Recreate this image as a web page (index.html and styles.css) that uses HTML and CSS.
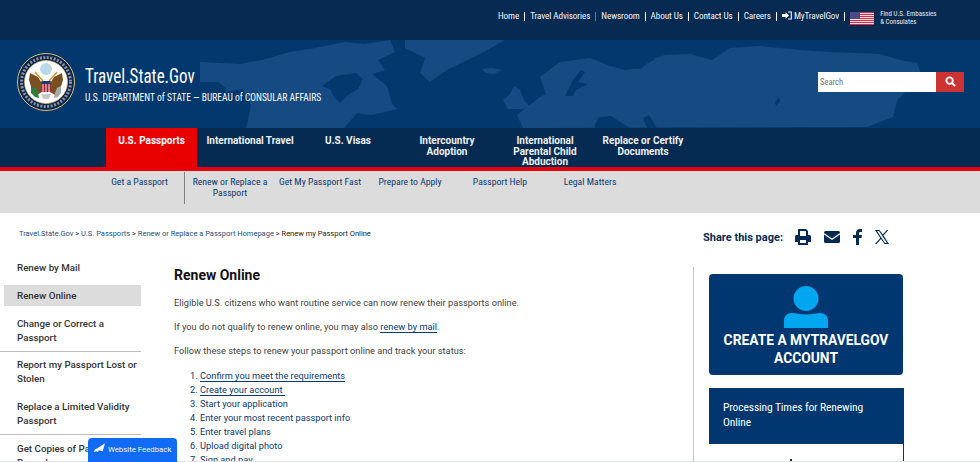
FILE: index.html
```html
<!DOCTYPE html>
<html lang="en">
<head>
  <meta charset="UTF-8">
  <meta name="viewport" content="width=device-width, initial-scale=1.0">
  <title>Renew my Passport Online</title>
  <link rel="stylesheet" href="styles.css">
</head>
<body>
  <div class="top-bar">
    <a class="top-link" href="#">Home</a><span class="pipe"></span>
    <a class="top-link" href="#">Travel Advisories</a><span class="pipe pipe-red"></span>
    <a class="top-link" href="#">Newsroom</a><span class="pipe"></span>
    <a class="top-link" href="#">About Us</a><span class="pipe"></span>
    <a class="top-link" href="#">Contact Us</a><span class="pipe"></span>
    <a class="top-link" href="#">Careers</a><span class="pipe"></span>
    <a class="top-link" href="#">
      <svg class="login-icon" viewBox="0 0 14 12" width="10" height="9"><path d="M0 4h5V1.500L10 6l-5 4.500V8H0z" fill="#fff"/><path d="M8.500 1H13v10H8.500" fill="none" stroke="#fff" stroke-width="1.500"/></svg>
      MyTravelGov</a><span class="pipe"></span>
    <svg class="flag" viewBox="0 0 24 13" width="24" height="13">
      <rect width="24" height="13" fill="#f4d9dc"/>
      <path d="M0 .5h24M0 2.500h24M0 4.500h24M0 6.500h24M0 8.500h24M0 10.500h24M0 12.500h24" stroke="#c8324a" stroke-width="1"/>
      <rect width="10" height="7" fill="#4c4a86"/>
    </svg>
    <a class="embassy" href="#">Find U.S. Embassies<br>&amp; Consulates</a>
  </div>

  <header class="masthead">
    <svg class="map" viewBox="0 0 980 88" width="980" height="88">
      <g fill="#164a83">
        <path d="M200 22l40 2 22-4 28-8 25-4 30-6 20 2 25-4 5 12-17 8 7 10-13 4 15 12 5 18 5 5-25 6-15-2-12 14-8 10h-32l-10-8-24 8h-30l6-12 4-20-8-16-24 4-19 4z"/>
        <path d="M405 0h100l-25 14-33 16-17 12-10-9 5-15-20-10z"/>
        <path d="M482 29l10-1 10 2-8 4-8-1z"/>
        <path d="M503 60l7-6 4-8 6 4 4 10 6 7-8 2-14 0zM540 88l-17 0-6-13 23-18 6-3-6-17 20-15 30-4 20 8 15 4 15-2 10-8 15-5 25-1 22 6 18-12 30-2 40 4 30 2 50 2 20 6 17 3 5 14-25 23-4 17-26 10z"/>
      </g>
      <g fill="#03386f">
        <path d="M322 46l14-10 20-3 7 6-5 10-10 6-8 8-6-6-4-8z"/>
        <path d="M200 42h18l8 6-2 12 6 14-4 14h-26z"/>
        <path d="M567 52l6-12 8-10 4 2-7 10 10 2-12 6-3 6-8 0z"/>
        <path d="M595 84l4-7 12-1 8 5 11 7h-35zM643 78l6-3 8 13h-10z"/>
        <path d="M775 62l4-5 1 5-4 4z"/>
        <path d="M632 28l6-6 12-3 6 0-8 4-8 6z"/>
      </g>
    </svg>
    <div class="brand">
      <svg class="seal" viewBox="0 0 58 58" width="58" height="58">
        <circle cx="29" cy="29" r="28.500" fill="#0c2548" stroke="#d8c27a" stroke-width="1"/>
        <circle cx="29" cy="29" r="24.500" fill="none" stroke="#8d93a6" stroke-width="3" stroke-dasharray="2 1.500"/>
        <circle cx="29" cy="29" r="21.500" fill="#fff" stroke="#d8c27a" stroke-width=".7"/>
        <circle cx="29" cy="16" r="6" fill="#b9d8e8"/>
        <path fill="#7a4f22" d="M13 20l8 4 5 8-1 7-5 3-5-5-3-10zM45 20l-8 4-5 8 1 7 5 3 5-5 3-10z"/>
        <path d="M18 19l8 9M40 19l-8 9" stroke="#c79a2b" stroke-width="1.500"/>
        <rect x="24.500" y="28" width="9" height="11" fill="#a81f3a"/>
        <rect x="24.500" y="28" width="9" height="3" fill="#25356d"/>
        <path d="M26 31v8M29 31v9M32 31v8" stroke="#fff" stroke-width=".9"/>
        <path fill="#2f7d3a" d="M14 34l5 1 2 5 1 5-4-1-4-4z"/>
        <path fill="#a8a8a8" d="M44 33l-4 2-2 5-1 5 4-1 3-4z"/>
        <path fill="#c9c9c9" d="M24 41h10l-2 5h-6z"/>
      </svg>
      <div class="brand-text">
        <a class="site-name" href="#">Travel.State.Gov</a>
        <div class="bureau">U.S. DEPARTMENT of STATE — BUREAU of CONSULAR AFFAIRS</div>
      </div>
    </div>
    <form class="search">
      <input class="search-input" type="text" placeholder="Search">
      <button class="search-btn" type="button" aria-label="Search">
        <svg viewBox="0 0 12 12" width="11" height="11"><circle cx="5" cy="5" r="3.500" fill="none" stroke="#fff" stroke-width="2"/><path d="M7.500 7.500L11 11" stroke="#fff" stroke-width="2.200"/></svg>
      </button>
    </form>
  </header>

  <nav class="main-nav">
    <a class="main-item active" href="#">U.S. Passports</a>
    <a class="main-item" href="#">International Travel</a>
    <a class="main-item" href="#">U.S. Visas</a>
    <a class="main-item" href="#">Intercountry<br>Adoption</a>
    <a class="main-item" href="#">International<br>Parental Child<br>Abduction</a>
    <a class="main-item" href="#">Replace or Certify<br>Documents</a>
  </nav>

  <nav class="sub-nav">
    <a class="sub-item sub-first" href="#">Get a Passport</a>
    <a class="sub-item" href="#">Renew or Replace a<br>Passport</a>
    <a class="sub-item" href="#">Get My Passport Fast</a>
    <a class="sub-item" href="#">Prepare to Apply</a>
    <a class="sub-item" href="#">Passport Help</a>
    <a class="sub-item" href="#">Legal Matters</a>
  </nav>

  <div class="crumb-row">
    <div class="crumbs"><a href="#">Travel.State.Gov</a> &gt; <a href="#">U.S. Passports</a> &gt; <a href="#">Renew or Replace a Passport Homepage</a> &gt; <span>Renew my Passport Online</span></div>
    <div class="share">
      <span class="share-label">Share this page:</span>
      <svg class="share-icon" viewBox="0 0 16 16" width="16" height="16"><path fill="#062b53" fill-rule="evenodd" d="M3 0h8l2 2v4h1.500A1.500 1.500 0 0 1 16 7.500V13h-3v3H3v-3H0V7.500A1.500 1.500 0 0 1 1.500 6H3zm2 2v5h6V2zM5 11v3h6v-3z"/></svg>
      <svg class="share-icon" viewBox="0 0 16 12" width="16" height="12"><path fill="#062b53" d="M1.500 0h13A1.500 1.500 0 0 1 16 1.500v.4L8 7.500 0 1.900v-.4A1.500 1.500 0 0 1 1.500 0zM0 3.500l8 5.600 8-5.600v7A1.500 1.500 0 0 1 14.500 12h-13A1.500 1.500 0 0 1 0 10.500z"/></svg>
      <svg class="share-icon" viewBox="0 0 9 16" width="9" height="16"><path fill="#062b53" d="M3 16V9H0V6h3V4c0-2.700 1.600-4 4-4h2v3H7.500C6.300 3 6 3.500 6 4.500V6h3l-.5 3H6v7z"/></svg>
      <svg class="share-icon" viewBox="0 0 14 14" width="14" height="14"><path fill="#062b53" fill-rule="evenodd" d="M0 0h4.500l3.300 4.600L11.800 0h1.500L8.500 5.600 14 14H9.500L6 9l-4.400 5H0l5.300-6zM2 1l8 12h2L4 1z"/></svg>
    </div>
  </div>

  <div class="content">
    <aside class="side-nav">
      <a class="side-item" href="#">Renew by Mail</a>
      <a class="side-item side-active" href="#">Renew Online</a>
      <a class="side-item side-rule" href="#">Change or Correct a Passport</a>
      <a class="side-item" href="#">Report my Passport Lost or Stolen</a>
      <a class="side-item side-rule side-rule-wide" href="#">Replace a Limited Validity Passport</a>
      <a class="side-item" href="#">Get Copies of Passport Records</a>
    </aside>

    <main class="article">
      <h1 class="title">Renew Online</h1>
      <p>Eligible U.S. citizens who want routine service can now renew their passports online.</p>
      <p>If you do not qualify to renew online, you may also <a class="inline-link" href="#">renew by mail</a>.</p>
      <p>Follow these steps to renew your passport online and track your status:</p>
      <ol class="steps">
        <li><a href="#">Confirm you meet the requirements</a></li>
        <li><a href="#">Create your account&nbsp;</a></li>
        <li>Start your application</li>
        <li>Enter your most recent passport info</li>
        <li>Enter travel plans</li>
        <li>Upload digital photo</li>
        <li>Sign and pay</li>
      </ol>
    </main>

    <aside class="right-col">
      <a class="account-card" href="#">
        <svg viewBox="0 0 44 42" width="44" height="42"><circle cx="22" cy="12.500" r="12.500" fill="#00a6f0"/><path fill="#00a6f0" d="M0 42v-7c0-5 3-8 8-8 4 0 8 1.500 14 1.500S32 27 36 27c5 0 8 3 8 8v7z"/></svg>
        <span>CREATE A MYTRAVELGOV ACCOUNT</span>
      </a>
      <div class="times-box">
        <h2 class="times-title">Processing Times for Renewing Online</h2>
        <div class="times-body"><span class="dot"></span></div>
      </div>
    </aside>
  </div>

  <a class="feedback" href="#">
    <svg viewBox="0 0 14 12" width="11" height="10"><path fill="#fff" d="M0 11l3-1 2 1 1-2 5 1 3-10-9 6-4 2z"/></svg>
    Website Feedback
  </a>
</body>
</html>
```

FILE: styles.css
```css
html, body {
  height: 462px;
  overflow: hidden;
}
body {
  margin: 0;
  font-family: Roboto, "Liberation Sans", sans-serif;
  color: #333;
  background: #fff;
  border-bottom: 1px solid #dfe5ea;
  box-sizing: border-box;
}
a {
  text-decoration: none;
}

/* top utility bar */
.top-bar {
  height: 40px;
  box-sizing: border-box;
  padding: 9px 0 0 498px;
  background: #062a52;
  display: flex;
  align-items: flex-start;
  white-space: nowrap;
}
.top-link {
  color: #f2f5f8;
  font-stretch: 75%;
  font-size: 9.200px;
  letter-spacing: -.1px;
  line-height: 14px;
}
.login-icon {
  vertical-align: -1px;
}
.pipe {
  width: 1px;
  height: 9px;
  margin: 3px 5px 0 5px;
  background: #fff;
}
.pipe-red {
  background: #e0435a;
}
.flag {
  margin: 3px 6px 0 0;
  flex: none;
}
.embassy {
  color: #e6ebf0;
  font-stretch: 75%;
  font-size: 7px;
  line-height: 8px;
  margin-top: 1px;
}

/* masthead */
.masthead {
  position: relative;
  height: 88px;
  background: #03386f;
  display: flex;
  justify-content: space-between;
  overflow: hidden;
}
.map {
  position: absolute;
  left: 0;
  top: 0;
}
.brand {
  position: relative;
  display: flex;
  align-items: flex-start;
  padding: 13px 0 0 17px;
  gap: 10px;
}
.site-name {
  display: block;
  color: #fff;
  font-stretch: 75%;
  font-size: 20px;
  line-height: 24px;
  margin-top: 11px;
  transform: scaleX(.85);
  transform-origin: left;
}
.bureau {
  color: #fff;
  font-stretch: 75%;
  font-size: 10.500px;
  line-height: 14px;
  margin-top: 3px;
  transform: scaleX(.905);
  transform-origin: left;
}
.search {
  position: relative;
  display: flex;
  margin: 32px 16px 0 0;
  height: 20px;
}
.search-input {
  width: 118px;
  box-sizing: border-box;
  border: 0;
  padding: 0 2px;
  font-size: 8.500px;
  font-family: Roboto, sans-serif;
  font-stretch: 75%;
  background: #fff;
}
.search-btn {
  width: 28px;
  padding: 0;
  border: 0;
  background: #cc3333;
}

/* main navigation */
.main-nav {
  height: 39px;
  padding-left: 106px;
  background: #062b53;
  border-bottom: 4px solid #e80000;
  display: grid;
  grid-template-columns: 91px 106px 90px 108px 88px 108px;
}
.main-item {
  color: #eef1f4;
  font-size: 10px;
  font-weight: 700;
  line-height: 10.500px;
  text-align: center;
  padding-top: 8px;
}
.main-item.active {
  background: #e80000;
  color: #fff;
}

/* sub navigation */
.sub-nav {
  height: 42px;
  padding-left: 95px;
  background: #dcdcdc;
  display: grid;
  grid-template-columns: repeat(6, 90px);
  align-items: start;
}
.sub-item {
  color: #0a3a70;
  font-stretch: 75%;
  font-size: 9.700px;
  line-height: 11px;
  text-align: center;
  padding-top: 5px;
}
.sub-first {
  height: 28px;
  margin-top: 1px;
  padding-top: 4px;
  border-right: 1px solid #808080;
}

/* breadcrumb and share */
.crumb-row {
  height: 54px;
  display: flex;
  justify-content: space-between;
  padding: 16px 91px 0 19px;
  box-sizing: border-box;
}
.crumbs {
  font-size: 7.500px;
  line-height: 10px;
  color: #222;
}
.crumbs a {
  color: #24507f;
}
.share {
  display: flex;
  align-items: center;
  height: 18px;
  margin-top: -1px;
}
.share-label {
  font-size: 11px;
  font-weight: 700;
  color: #062b53;
  margin-right: 12px;
}
.share-icon {
  margin-right: 13px;
}
.share-icon:last-child {
  margin-right: 0;
}

/* page body */
.content {
  display: grid;
  grid-template-columns: 174px 519px 1fr;
}
.side-nav {
  width: 141px;
  margin-top: -6px;
  font-size: 9.750px;
  line-height: 14px;
  font-weight: 500;
}
.side-item {
  display: block;
  color: #333;
  padding: 0 0 0 17px;
  margin-bottom: 14px;
}
.side-active {
  margin: -4px 0 11px 4px;
  padding: 4px 0 3px 13px;
  background: #dcdcdc;
}
.side-rule {
  padding-bottom: 6px;
  margin-bottom: 6px;
  border-bottom: 1px solid #bdbdbd;
}
.side-rule-wide {
  margin-bottom: 7px;
}
.article {
  font-size: 9.250px;
  line-height: 14px;
  padding-right: 20px;
}
.title {
  margin: 0 0 13px;
  font-size: 14px;
  line-height: 16px;
  font-weight: 700;
  color: #111;
}
.article p {
  margin: 0 0 10px;
  color: #444;
}
.inline-link {
  color: #0a3a70;
  border-bottom: 1px solid #0a3a70;
}
.steps {
  margin: 11px 0 0;
  padding-left: 26px;
  color: #0b3a6e;
}
.steps a {
  color: #0a3a70;
  border-bottom: 1px solid #0a3a70;
}
.right-col {
  border-left: 1px solid #c4c4c4;
  padding: 7px 0 0 15px;
  height: 195px;
  box-sizing: border-box;
  overflow: hidden;
}
.account-card {
  width: 194px;
  height: 101px;
  box-sizing: border-box;
  padding-top: 12px;
  background: #003770;
  border-radius: 4px;
  color: #fff;
  font-size: 13.800px;
  line-height: 17.500px;
  font-weight: 700;
  text-align: center;
  display: flex;
  flex-direction: column;
  align-items: center;
  gap: 4px;
}
.account-card span {
  width: 180px;
}
.times-box {
  width: 195px;
  margin-top: 13px;
  box-sizing: border-box;
  border-right: 1px solid #003770;
}
.times-title {
  margin: 0;
  height: 56px;
  box-sizing: border-box;
  padding: 12px 30px 0 14px;
  background: #003770;
  color: #fff;
  font-stretch: 75%;
  font-size: 11.500px;
  letter-spacing: -.1px;
  line-height: 15px;
  font-weight: 400;
}
.times-body {
  height: 30px;
  position: relative;
}
.dot {
  position: absolute;
  left: 81px;
  top: 15px;
  width: 2px;
  height: 2px;
  background: #222;
}

/* floating feedback button */
.feedback {
  position: fixed;
  left: 88px;
  top: 438px;
  width: 89px;
  height: 24px;
  box-sizing: border-box;
  padding: 5px 0 0 6px;
  background: #126bf5;
  border-radius: 4px 4px 0 0;
  color: #f2f6ff;
  font-size: 7.800px;
  line-height: 14px;
  white-space: nowrap;
}
.feedback svg {
  margin-right: 1px;
  vertical-align: -1px;
}
```
